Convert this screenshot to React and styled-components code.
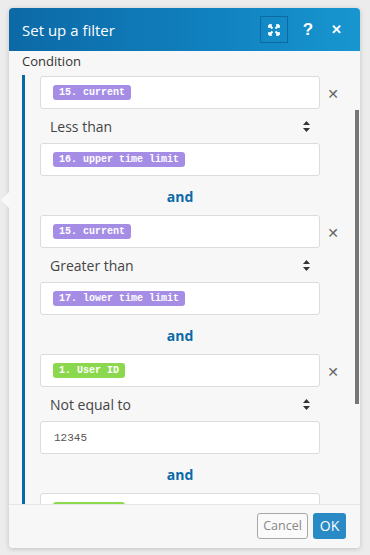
import React from 'react'
import { styled, createGlobalStyle } from 'styled-components'

const GlobalStyle = createGlobalStyle`
  html, body {
    margin: 0;
    padding: 0;
    background: #ececec;
    font-family: 'Open Sans', 'Noto Sans', sans-serif;
  }
`

const conditions = [
  { left: { label: '15. current', tone: 'purple' }, op: 'Less than', right: { label: '16. upper time limit', tone: 'purple' } },
  { left: { label: '15. current', tone: 'purple' }, op: 'Greater than', right: { label: '17. lower time limit', tone: 'purple' } },
  { left: { label: '1. User ID', tone: 'green' }, op: 'Not equal to', right: { text: '12345' } },
  { left: { label: '1. User ID', tone: 'green' }, op: 'Equal to', right: { text: '' } },
]

const ExpandIcon = () => (
  <svg width="12" height="12" viewBox="0 0 12 12" fill="none" stroke="#fff" strokeWidth="2">
    <path d="M1 1l3.5 3.5M11 1L7.5 4.5M1 11l3.5-3.5M11 11L7.5 7.5" />
    <path d="M1 1h3M1 1v3M11 1H8M11 1v3M1 11h3M1 11V8M11 11H8M11 11V8" strokeWidth="1.6" />
  </svg>
)

const SortIcon = () => (
  <svg width="7" height="11" viewBox="0 0 7 11" fill="#333">
    <path d="M3.5 0L7 4H0z" />
    <path d="M3.5 11L7 7H0z" />
  </svg>
)

const Token = ({ value }) =>
  value.label ? <Pill $tone={value.tone}>{value.label}</Pill> : <Plain>{value.text}</Plain>

export default function App() {
  return (
    <>
      <GlobalStyle />
      <Page>
        <Panel>
          <Notch />
          <Header>
            <Title>Set up a filter</Title>
            <Tools>
              <ToolBox><ExpandIcon /></ToolBox>
              <ToolGlyph>?</ToolGlyph>
              <ToolGlyph $small>✕</ToolGlyph>
            </Tools>
          </Header>
          <Body>
            <Label>Condition</Label>
            <Group>
              {conditions.map((c, i) => (
                <React.Fragment key={i}>
                  {i > 0 && <And>and</And>}
                  <Row>
                    <Field><Token value={c.left} /></Field>
                    <Remove>✕</Remove>
                  </Row>
                  <Select>
                    <span>{c.op}</span>
                    <SortIcon />
                  </Select>
                  <Row>
                    <Field><Token value={c.right} /></Field>
                  </Row>
                </React.Fragment>
              ))}
            </Group>
            <Scrollbar />
          </Body>
          <Footer>
            <CancelButton>Cancel</CancelButton>
            <OkButton>OK</OkButton>
          </Footer>
        </Panel>
      </Page>
    </>
  )
}

const Page = styled.div`
  padding: 8px 10px 7px 9px;
`

const Panel = styled.div`
  position: relative;
  width: 351px;
  height: 540px;
  display: flex;
  flex-direction: column;
  background: #f7f7f7;
  border-radius: 4px;
  box-shadow: 0 1px 5px rgba(0, 0, 0, 0.18);
`

const Notch = styled.div`
  position: absolute;
  left: -8px;
  top: 184px;
  width: 0;
  height: 0;
  border-top: 8px solid transparent;
  border-bottom: 8px solid transparent;
  border-right: 8px solid #f9f9f9;
`

const Header = styled.div`
  height: 43px;
  flex-shrink: 0;
  display: flex;
  align-items: center;
  justify-content: space-between;
  padding: 0 12px 0 13px;
  border-radius: 4px 4px 0 0;
  background: linear-gradient(90deg, #0c69a6 0%, #1182c0 60%, #1796cf 100%);
`

const Title = styled.div`
  color: #fff;
  font-size: 15px;
`

const Tools = styled.div`
  display: flex;
  align-items: center;
  gap: 4px;
`

const ToolBox = styled.div`
  width: 28px;
  height: 27px;
  display: flex;
  align-items: center;
  justify-content: center;
  border: 1px solid #0d6aa3;
  box-sizing: border-box;
  margin-right: 4px;
`

const ToolGlyph = styled.div`
  width: 24px;
  text-align: center;
  color: #fff;
  font-family: 'Liberation Sans', Arial, sans-serif;
  font-weight: bold;
  font-size: ${p => (p.$small ? '13px' : '17px')};
`

const Body = styled.div`
  position: relative;
  flex: 1;
  overflow: hidden;
  padding: 0 0 0 13px;
`

const Label = styled.div`
  height: 22px;
  line-height: 18px;
  font-size: 13px;
  color: #333;
  padding-top: 1px;
  box-sizing: border-box;
`

const Group = styled.div`
  margin-top: 2px;
  border-left: 3px solid #0b68a7;
  padding: 1px 0 0 15px;
`

const Row = styled.div`
  display: flex;
  align-items: center;
`

const Field = styled.div`
  width: 280px;
  height: 33px;
  box-sizing: border-box;
  display: flex;
  align-items: center;
  padding: 0 12px;
  background: #fff;
  border: 1px solid #dcdcdc;
  border-radius: 3px;
`

const Remove = styled.div`
  margin-left: 6px;
  width: 14px;
  text-align: center;
  color: #666;
  font-family: 'DejaVu Sans', sans-serif;
  font-size: 14px;
  padding-top: 2px;
`

const Pill = styled.span`
  display: inline-block;
  height: 15px;
  line-height: 15px;
  padding: 0 6px;
  border-radius: 3px;
  color: #fff;
  font-family: 'Liberation Mono', 'Courier New', monospace;
  font-weight: bold;
  font-size: 10px;
  background: ${p => (p.$tone === 'green' ? '#8bd84e' : '#a58de6')};
`

const Plain = styled.span`
  color: #555;
  font-family: 'Liberation Mono', 'Courier New', monospace;
  font-size: 11px;
  padding-left: 1px;
`

const Select = styled.div`
  width: 280px;
  height: 34px;
  box-sizing: border-box;
  display: flex;
  align-items: center;
  justify-content: space-between;
  padding: 0 10px 0 10px;
  font-size: 14px;
  color: #444;
`

const And = styled.div`
  width: 280px;
  height: 39px;
  line-height: 41px;
  text-align: center;
  color: #0b6aa8;
  font-weight: bold;
  font-size: 14px;
`

const Scrollbar = styled.div`
  position: absolute;
  right: 1px;
  top: 59px;
  width: 4px;
  height: 294px;
  background: #767676;
`

const Footer = styled.div`
  height: 44px;
  flex-shrink: 0;
  display: flex;
  align-items: center;
  justify-content: flex-end;
  gap: 5px;
  padding: 0 14px 2px 0;
  box-sizing: border-box;
  border-top: 1px solid #e6e6e6;
  background: #f7f7f7;
  border-radius: 0 0 4px 4px;
`

const CancelButton = styled.button`
  height: 26px;
  width: 51px;
  padding: 0;
  background: #fafafa;
  border: 1px solid #a8a8a8;
  border-radius: 3px;
  color: #888;
  font-family: 'Open Sans', 'Noto Sans', sans-serif;
  font-size: 12.5px;
`

const OkButton = styled.button`
  height: 26px;
  width: 33px;
  padding: 0;
  background: #2a8ac5;
  border: none;
  border-radius: 3px;
  color: #fff;
  font-family: 'Open Sans', 'Noto Sans', sans-serif;
  font-size: 14px;
`
